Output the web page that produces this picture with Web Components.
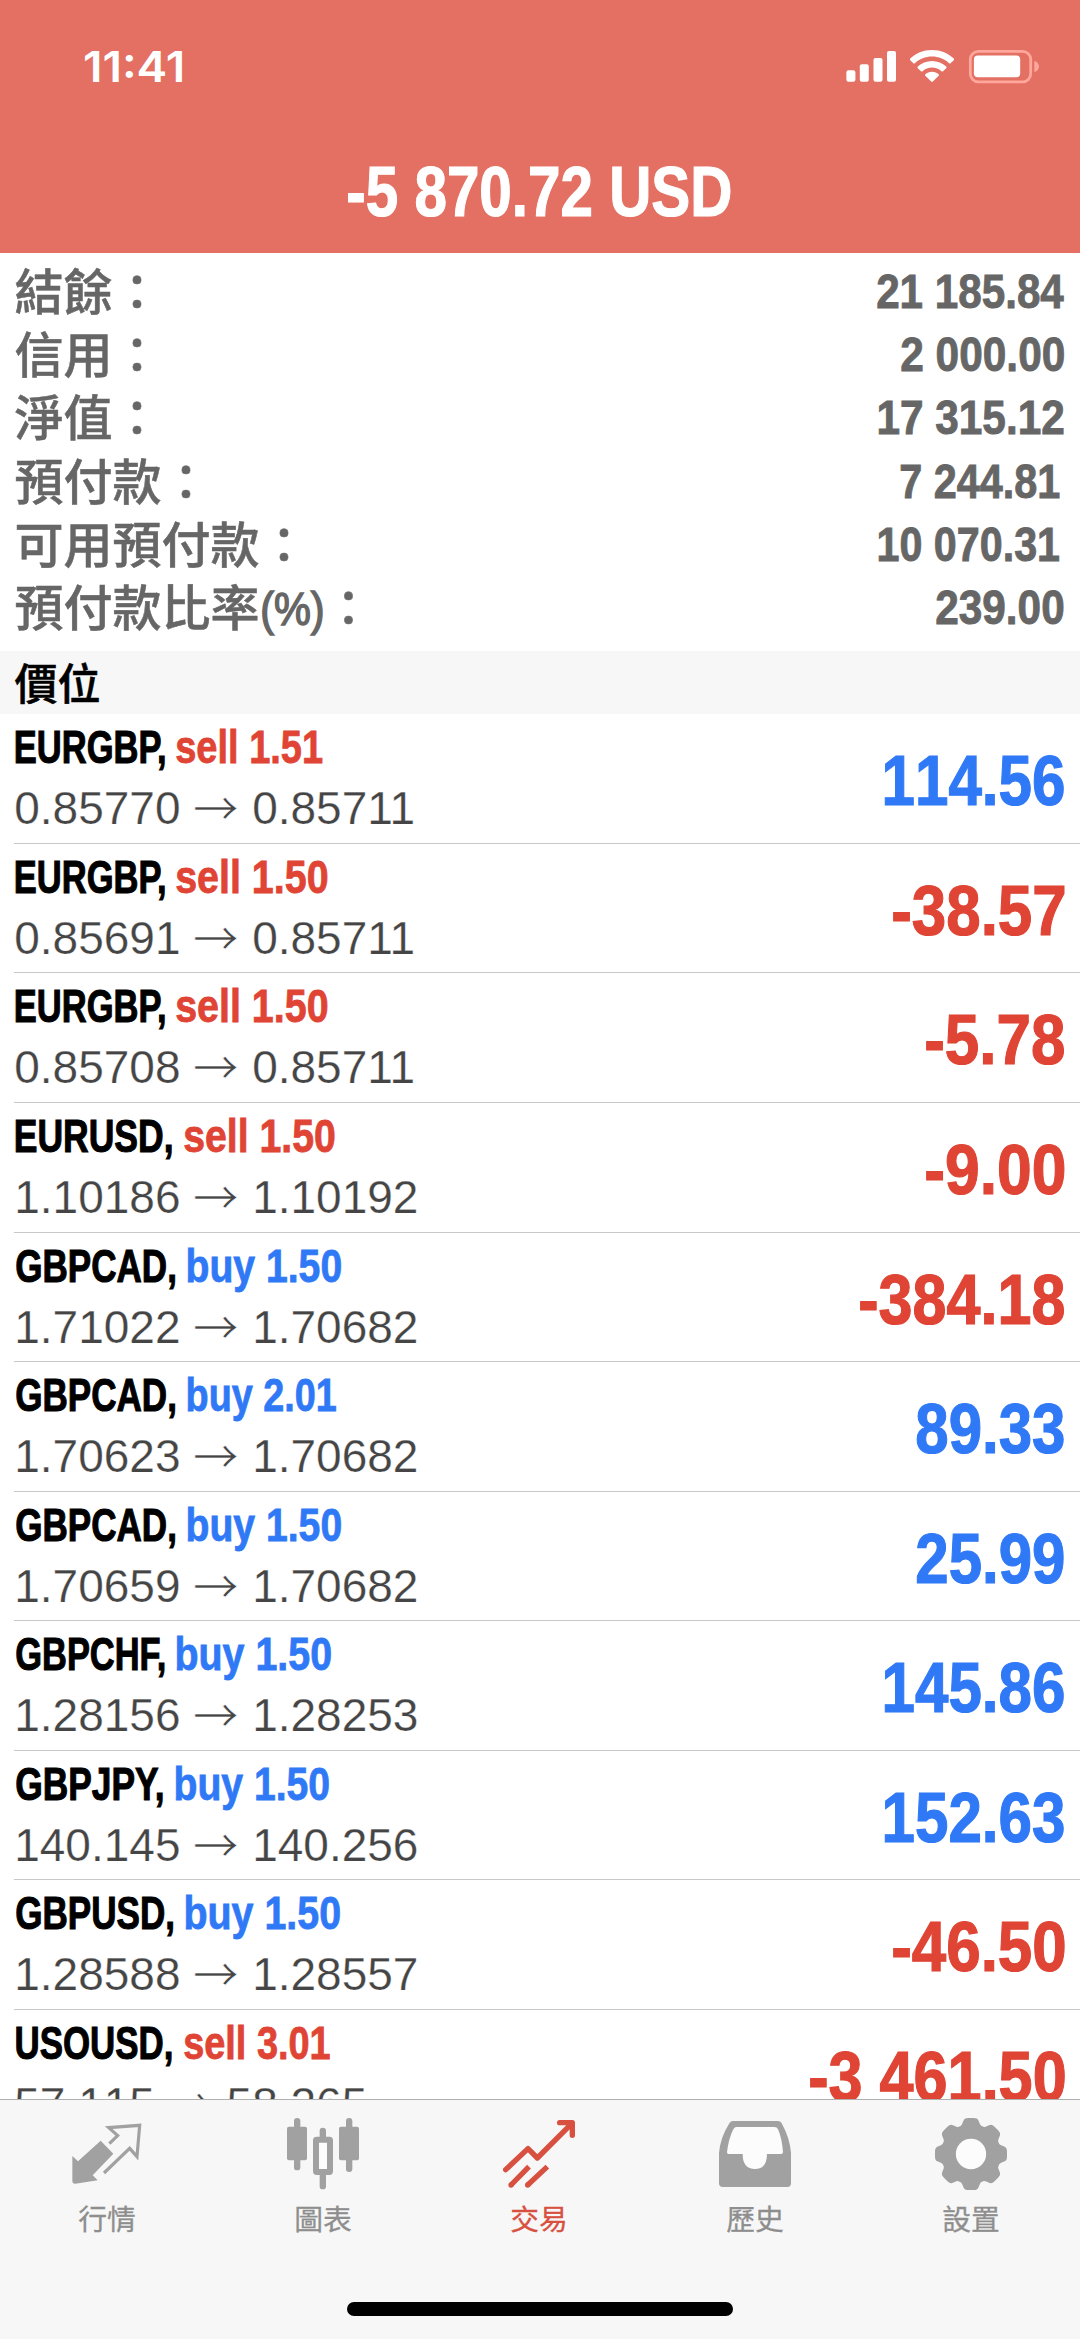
<!DOCTYPE html>
<html lang="zh-Hant">
<head>
<meta charset="utf-8">
<title>Trade</title>
<style>
html,body{margin:0;padding:0;background:#fff}
body{width:1080px;height:2339px;overflow:hidden;font-family:"Liberation Sans","Noto Sans CJK TC",sans-serif}
</style>
</head>
<body>
<trade-app></trade-app>
<script>
const measureCtx = document.createElement('canvas').getContext('2d');

// One line of text whose layout box is its inked width; `w` condenses it to a given width.
class InkText extends HTMLElement {
  connectedCallback() {
    const root = this.attachShadow({mode: 'open'});
    const size = this.getAttribute('size');
    const weight = this.getAttribute('weight') || '700';
    const family = this.getAttribute('family') || '"Liberation Sans"';
    const kerning = this.hasAttribute('nokern') ? 'none' : 'normal';
    const font = `${weight} ${size}px ${family}, sans-serif`;
    measureCtx.font = font;
    measureCtx.fontKerning = kerning;
    const m = measureCtx.measureText(this.textContent);
    const left = -m.actualBoundingBoxLeft, ink = m.actualBoundingBoxRight + m.actualBoundingBoxLeft;
    const w = parseFloat(this.getAttribute('w')) || ink;
    root.innerHTML = `<style>
      :host{display:block;flex:none;width:${w}px;height:${size}px;white-space:pre}
      span{display:inline-block;font:${font};font-kerning:${kerning};line-height:${size}px;transform-origin:0 0;
        transform:scaleX(${w / ink}) translateX(${-left}px)}
    </style><span><slot></slot></span>`;
  }
}
customElements.define('ink-text', InkText);

class StatusBar extends HTMLElement {
  constructor() {
    super();
    this.attachShadow({mode: 'open'}).innerHTML = `<style>
      :host{display:flex;justify-content:space-between;align-items:flex-start;height:132px;padding:45px 35px 0 84px;box-sizing:border-box;color:#fff}
      svg{display:block}
    </style>
    <ink-text size="43" weight="600" family="Inter" w="99">11:41</ink-text>
    <svg width="205" height="42" viewBox="840 45 205 42" fill="#fff">
      <rect x="846.4" y="70.3" width="9" height="11.5" rx="2"/><rect x="859.8" y="64.3" width="9" height="17.5" rx="2"/>
      <rect x="873.5" y="58" width="9" height="23.8" rx="2"/><rect x="887" y="51" width="9" height="30.8" rx="2"/>
      <path d="M932 50C940.500 50 948.300 53.200 953.800 58.600Q954.400 59.400 953.800 60.200L950.600 63.200Q949.800 63.900 949 63.200C944.500 59 938.500 56.600 932 56.600S919.500 59 915 63.200Q914.200 63.900 913.400 63.200L910.200 60.200Q909.600 59.400 910.200 58.600C915.700 53.200 923.500 50 932 50Z"/>
      <path d="M932 61C937.500 61 942.500 63.100 946.200 66.600Q946.900 67.400 946.200 68.200L943 71.200Q942.200 71.900 941.400 71.200C938.900 69 935.600 67.600 932 67.600S925.100 69 922.600 71.200Q921.800 71.900 921 71.200L917.800 68.200Q917.100 67.400 917.800 66.600C921.500 63.100 926.500 61 932 61Z"/>
      <path d="M932 71.700C934.700 71.700 937 72.600 938.700 74.200Q939.400 75 938.700 75.700L932.800 81.500Q932 82.200 931.200 81.500L925.300 75.700Q924.600 75 925.300 74.200C927 72.600 929.300 71.700 932 71.700Z"/>
      <rect x="970.300" y="51.300" width="60.400" height="30.500" rx="8" fill="none" stroke="#ffa79c" stroke-width="2.800"/>
      <rect x="973.900" y="55.600" width="46.300" height="21.700" rx="4"/>
      <path d="M1034.300 61C1040.500 62.500 1040.500 70.500 1034.300 72Z" fill="#ffa79c"/>
    </svg>`;
  }
}
customElements.define('status-bar', StatusBar);

class SummaryRow extends HTMLElement {
  connectedCallback() {
    const inset = this.getAttribute('inset') || 0;
    this.attachShadow({mode: 'open'}).innerHTML = `<style>
      :host{display:flex;justify-content:space-between;align-items:center;height:63.360px;padding:12px 16px 0 14.500px;box-sizing:border-box;color:#666}
      .label{display:flex;align-items:center;margin-bottom:6px;font:500 49px/49px "Noto Sans CJK TC",sans-serif;white-space:nowrap;-webkit-text-stroke:.5px currentColor}
      .value{padding-right:${inset}px;-webkit-text-stroke:.9px currentColor}
    </style>
    <div class="label"><slot></slot></div>
    <div class="value"><ink-text nokern size="49" w="${this.getAttribute('w')}">${this.getAttribute('value')}</ink-text></div>`;
  }
}
customElements.define('summary-row', SummaryRow);

class PositionRow extends HTMLElement {
  connectedCallback() {
    const d = this.dataset;
    const blue = '#3079f6', red = '#df4434';
    const side = d.order.startsWith('buy') ? blue : red;
    this.attachShadow({mode: 'open'}).innerHTML = `<style>
      :host{display:block;height:129.600px;padding-left:14.400px;box-sizing:border-box}
      .row{display:flex;justify-content:space-between;height:100%;box-sizing:border-box;border-bottom:1px solid #c8c8c8;padding:0 16px 0 1.800px}
      .info{display:flex;flex-direction:column;gap:14px;padding-top:10px}
      .title{display:flex;height:47px;color:#000;-webkit-text-stroke:1.100px currentColor}
      .side{color:${side};margin-left:${d.gap}px;-webkit-text-stroke:.8px currentColor}
      .prices{display:flex;align-items:center;height:46px;margin-left:-2px;color:#454545;font:400 46px/46px "Liberation Sans",sans-serif;-webkit-text-stroke:.25px #fff}
      .open{font-kerning:none}
      .arrow{margin:0 14.500px 6px 13.500px;-webkit-text-stroke:.7px #fff}
      .profit{padding-top:33px;color:${d.profit.startsWith('-') ? red : blue};-webkit-text-stroke:1.200px currentColor}
    </style>
    <div class="row">
      <div class="info">
        <div class="title"><ink-text size="46.500" w="${d.sw}">${d.symbol},</ink-text><ink-text class="side" size="46.500" w="${d.ow}">${d.order}</ink-text></div>
        <div class="prices"><span class="open">${d.open}</span><ink-text class="arrow" size="46" weight="400" family="'Noto Sans CJK TC'" w="43.700">→</ink-text><span>${d.now}</span></div>
      </div>
      <div class="profit"><ink-text nokern size="69.500" w="${d.pw}">${d.profit}</ink-text></div>
    </div>`;
  }
}
customElements.define('position-row', PositionRow);

const gearPath = (() => {
  const pt = (x, y, a) => {
    const c = Math.cos(a), s = Math.sin(a);
    return (873 + x * c - y * s).toFixed(1) + ' ' + (492 + x * s + y * c).toFixed(1);
  };
  let d = '';
  for (let i = 0; i < 8; i++) {
    const a = i * Math.PI / 4;
    d += (i ? 'L' : 'M') + pt(-27, -89, a) + 'L' + pt(-22, -101, a) + 'Q' + pt(-19, -108, a) + ' ' + pt(-8, -108, a)
      + 'L' + pt(8, -108, a) + 'Q' + pt(19, -108, a) + ' ' + pt(22, -101, a) + 'L' + pt(27, -89, a)
      + 'Q' + pt(31, -82, a) + ' ' + pt(36, -83, a);
    d += 'Q' + pt(-31, -82, a + Math.PI / 4) + ' ' + pt(-27, -89, a + Math.PI / 4);
  }
  return d + 'Z';
})();

const icons = {
  quotes: ['213 384 216 216', `<path d="M302 452L340 491L278 556L293 571L226 581Q217 582 217 574V498L234 514Z"/>
    <path d="M328 461L353 437L326 413L419 406L411 500L389 475L312 549" fill="none" stroke="currentColor" stroke-width="9.500"/>`],
  charts: ['861 384 216 216', `<rect x="861" y="410" width="60" height="101" rx="6"/><rect x="882" y="384" width="19" height="157" rx="9.500"/>
    <rect x="1017" y="410" width="60" height="101" rx="6"/><rect x="1038" y="384" width="19" height="162" rx="9.500"/>
    <rect x="959" y="413" width="19" height="40" rx="9.500"/><rect x="959" y="540" width="19" height="58" rx="9.500"/>
    <rect x="948" y="449" width="42" height="97" rx="2" fill="#fcfcfc" stroke="currentColor" stroke-width="18"/>`],
  trade: ['309 384 216 216', `<g fill="none" stroke="currentColor" stroke-width="16" stroke-linecap="round" stroke-linejoin="round">
    <path d="M317 539L384 476L412 504L512 404M479 398H517V436"/></g>
    <g fill="none" stroke="currentColor" stroke-width="16"><path d="M333 585L387 530M383 585L442 530"/></g>
    <circle cx="333" cy="585" r="8"/><circle cx="383" cy="585" r="8"/>`],
  history: ['117 384 216 216', `<path d="M159 393H294Q301 393 305 400Q330 445 333 490V580Q333 591 322 591H128Q117 591 117 580V490Q120 445 148 400Q152 393 159 393Z"/>
    <path fill="#fcfcfc" d="M170 411H283Q291 411 294 418Q306 445 309 487Q309 492 303 492H261Q261 537 225 537Q188 537 188 492H146Q141 492 141 487Q146 445 160 418Q163 411 170 411Z"/>`],
  settings: ['765 384 216 216', `<path d="${gearPath}"/><circle cx="873" cy="492" r="45.500" fill="#fcfcfc"/>`]
};

class TabItem extends HTMLElement {
  connectedCallback() {
    const [box, shape] = icons[this.getAttribute('icon')];
    const active = this.hasAttribute('active');
    this.attachShadow({mode: 'open'}).innerHTML = `<style>
      :host{display:flex;flex-direction:column;align-items:center;width:216px;gap:12.500px;padding-top:18px}
      svg{display:block;width:72px;height:72px;color:${active ? '#d8503f' : '#a1a1a1'}}
      .name{font:400 28.800px/30px "Noto Sans CJK TC",sans-serif;color:${active ? '#d8503f' : '#8e8e8e'};-webkit-text-stroke:.3px currentColor}
    </style>
    <svg viewBox="${box}" fill="currentColor">${shape}</svg><div class="name"><slot></slot></div>`;
  }
}
customElements.define('tab-item', TabItem);

class TabBar extends HTMLElement {
  constructor() {
    super();
    this.attachShadow({mode: 'open'}).innerHTML = `<style>
      :host{display:flex;flex-direction:column;justify-content:space-between;align-items:center;height:240px;box-sizing:border-box;border-top:1px solid #b0b0b0;background:#f7f7f7;padding-bottom:23px}
      .tabs{display:flex;width:1080px;margin-left:-2px}
      .home{width:386px;height:14.500px;border-radius:8px;background:#000}
    </style>
    <div class="tabs"><tab-item icon="quotes">行情</tab-item><tab-item icon="charts">圖表</tab-item><tab-item icon="trade" active>交易</tab-item><tab-item icon="history">歷史</tab-item><tab-item icon="settings">設置</tab-item></div>
    <div class="home"></div>`;
  }
}
customElements.define('tab-bar', TabBar);

// symbol, symbol width, gap, order, order width, open price, current price, profit, profit width
const positions = [
  ['EURGBP', 148.4, 11.7, 'sell 1.51', 146.4, '0.85770', '0.85711', '114.56', 179],
  ['EURGBP', 148.4, 11.7, 'sell 1.50', 151, '0.85691', '0.85711', '-38.57', 171.3],
  ['EURGBP', 148.4, 11.7, 'sell 1.50', 151, '0.85708', '0.85711', '-5.78', 138],
  ['EURUSD', 155.3, 12.5, 'sell 1.50', 150.3, '1.10186', '1.10192', '-9.00', 138],
  ['GBPCAD', 158.7, 13.5, 'buy 1.50', 152.6, '1.71022', '1.70682', '-384.18', 204],
  ['GBPCAD', 158.7, 13.5, 'buy 2.01', 148, '1.70623', '1.70682', '89.33', 147],
  ['GBPCAD', 158.7, 13.5, 'buy 1.50', 152.6, '1.70659', '1.70682', '25.99', 147],
  ['GBPCHF', 148.2, 12.7, 'buy 1.50', 153.5, '1.28156', '1.28253', '145.86', 179],
  ['GBPJPY', 146.3, 13.3, 'buy 1.50', 152.5, '140.145', '140.256', '152.63', 179],
  ['GBPUSD', 156.8, 12.7, 'buy 1.50', 153.5, '1.28588', '1.28557', '-46.50', 171.3],
  ['USOUSD', 155.3, 12.5, 'sell 3.01', 146, '57.115', '58.265', '-3 461.50', 254.3]
];

class TradeApp extends HTMLElement {
  constructor() {
    super();
    const rows = positions.map(([s, sw, g, o, ow, a, b, p, pw]) =>
      `<position-row data-symbol="${s}" data-sw="${sw}" data-gap="${g}" data-order="${o}" data-ow="${ow}" data-open="${a}" data-now="${b}" data-profit="${p}" data-pw="${pw}"></position-row>`).join('');
    this.attachShadow({mode: 'open'}).innerHTML = `<style>
      :host{display:flex;flex-direction:column;height:2339px;background:#fff}
      header{flex:none;height:253.400px;background:#e37062;color:#fff;display:flex;flex-direction:column}
      .total{display:flex;justify-content:center;padding-top:25px;margin-right:2px;-webkit-text-stroke:1.200px currentColor}
      .summary{flex:none;padding-bottom:17px}
      .section{flex:none;display:flex;align-items:center;height:63.600px;padding:0 0 2px 14.500px;box-sizing:border-box;background:#f7f7f7;color:#000;font:500 43px/43px "Noto Sans CJK TC",sans-serif;-webkit-text-stroke:.5px currentColor}
      main{flex:1;min-height:0;overflow:hidden}
      tab-bar{flex:none}
      .pct{margin:0 2px 5px;-webkit-text-stroke:1.500px currentColor}
    </style>
    <header><status-bar></status-bar><div class="total"><ink-text nokern size="70.500" w="382">-5 870.72 USD</ink-text></div></header>
    <section class="summary">
      <summary-row value="21 185.84" w="186.600">結餘：</summary-row>
      <summary-row value="2 000.00" w="163.300">信用：</summary-row>
      <summary-row value="17 315.12" w="184.700">淨值：</summary-row>
      <summary-row value="7 244.81" w="158.300" inset="4.700">預付款：</summary-row>
      <summary-row value="10 070.31" w="180" inset="4.700">可用預付款：</summary-row>
      <summary-row value="239.00" w="127.600">預付款比率<ink-text class="pct" size="46" weight="400" w="60.500">(%)</ink-text>：</summary-row>
    </section>
    <div class="section">價位</div>
    <main>${rows}</main>
    <tab-bar></tab-bar>`;
  }
}
customElements.define('trade-app', TradeApp);
</script>
</body>
</html>
